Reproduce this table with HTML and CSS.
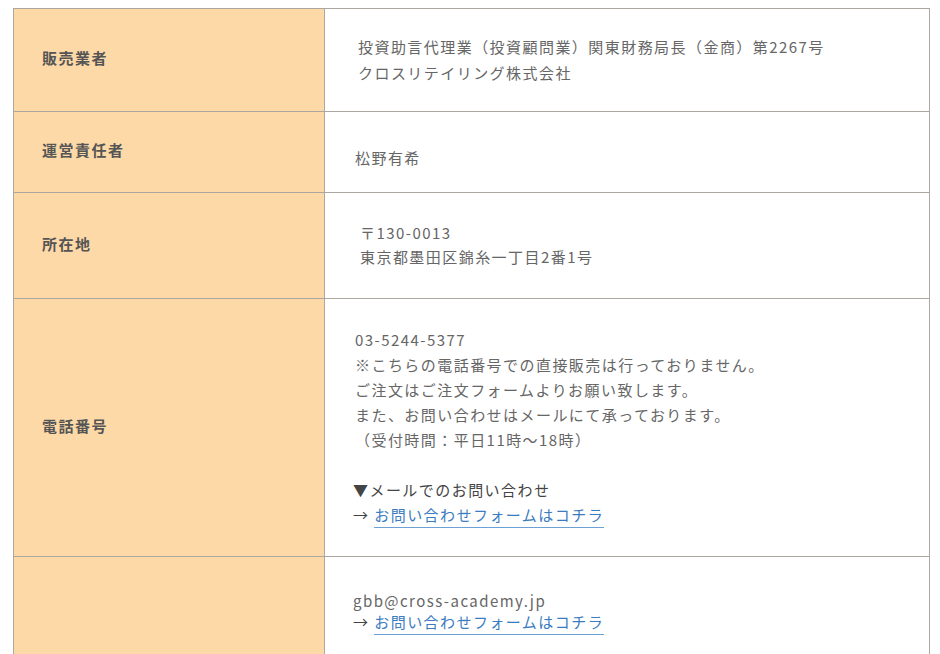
FILE: index.html
```html
<!DOCTYPE html>
<html lang="ja">
<head>
<meta charset="utf-8">
<title>特定商取引法に基づく表記</title>
<link rel="stylesheet" href="styles.css">
</head>
<body>
<div class="wrap">
  <table class="law">
    <colgroup>
      <col class="col-head">
      <col class="col-body">
    </colgroup>
    <tbody>
      <tr class="r1">
        <th>販売業者</th>
        <td><div class="indent-s">投資助言代理業（投資顧問業）関東財務局長（金商）第2267号<br>クロスリテイリング株式会社</div></td>
      </tr>
      <tr class="r2">
        <th>運営責任者</th>
        <td>松野有希</td>
      </tr>
      <tr class="r3">
        <th>所在地</th>
        <td><div class="indent-m">〒130-0013<br>東京都墨田区錦糸一丁目2番1号</div></td>
      </tr>
      <tr class="r4">
        <th>電話番号</th>
        <td>
          <div>03-5244-5377<br>※こちらの電話番号での直接販売は行っておりません。<br>ご注文はご注文フォームよりお願い致します。<br>また、お問い合わせはメールにて承っております。<br>（受付時間：平日11時～18時）</div>
          <div class="blank">&nbsp;</div>
          <div class="dark tight">▼メールでのお問い合わせ</div>
          <div class="dark tight">→ <a href="#" class="link">お問い合わせフォームはコチラ</a></div>
        </td>
      </tr>
      <tr class="r5">
        <th></th>
        <td>
          <div class="tight">gbb@cross-academy.jp</div>
          <div class="dark tight">→ <a href="#" class="link">お問い合わせフォームはコチラ</a></div>
        </td>
      </tr>
    </tbody>
  </table>
</div>
</body>
</html>
```

FILE: styles.css
```css
html, body {
  margin: 0;
  padding: 0;
  background: #ffffff;
}

body {
  font-family: "Noto Sans CJK JP", "Noto Sans", sans-serif;
  font-size: 15px;
  letter-spacing: 1.45px;
  color: #666666;
}

.wrap {
  padding: 8px 0 0 13px;
}

.law {
  border-collapse: collapse;
  width: 917px;
  table-layout: fixed;
}

.col-head {
  width: 311px;
}

.law th,
.law td {
  border: 1px solid #aca7a1;
  vertical-align: middle;
  text-align: left;
}

.law th {
  background: #fed9a8;
  color: #555555;
  font-weight: bold;
  letter-spacing: 1.5px;
  padding: 0 0 5px 28px;
  line-height: 25px;
}

.law td {
  background: #ffffff;
  padding: 0 0 0 30px;
  line-height: 25px;
}

.r1 td { padding-top: 25px; padding-bottom: 25px; line-height: 26px; }
.r2 td { padding-top: 33px; padding-bottom: 22px; }
.r3 td { padding-top: 28px; padding-bottom: 29px; line-height: 24px; }
.r4 td { padding-top: 28px; padding-bottom: 29px; }
.r5 td { padding-top: 33px; padding-bottom: 40px; line-height: 21px; }

.indent-s { padding-left: 3px; }
.indent-m { padding-left: 5px; }

.blank { height: 25px; }

.dark { color: #444444; }

.tight { margin-left: -2px; }

.link {
  color: #3b7cbf;
  text-decoration: none;
  border-bottom: 1px solid #6da1d6;
  padding-bottom: 2px;
}
```
